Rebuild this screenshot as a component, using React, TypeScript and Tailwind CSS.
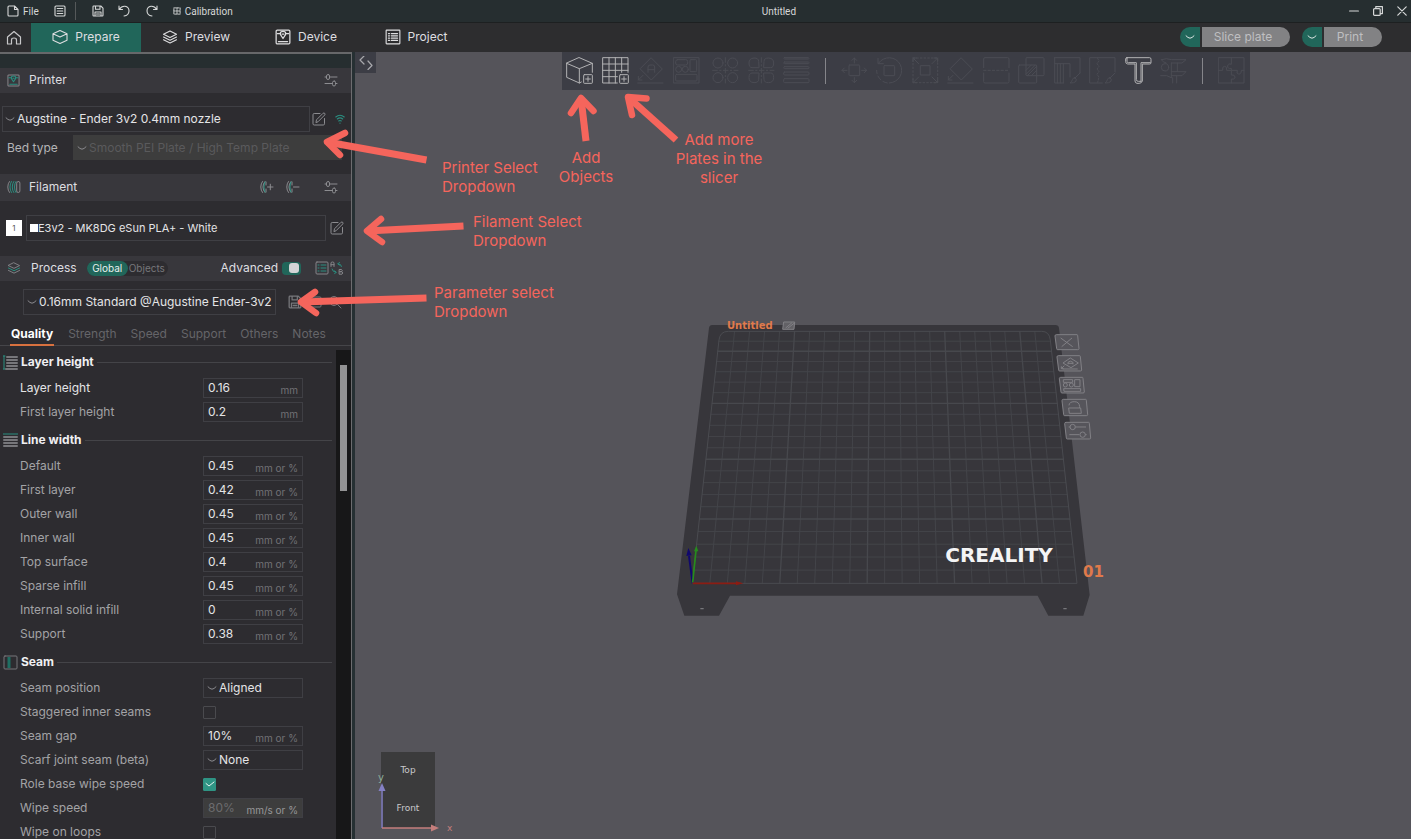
import React from "react";

type IconProps = { className?: string };

const TEAL = "#2a8f80";

function Svg({
  box,
  className,
  sw = 1,
  children,
}: {
  box: string;
  className?: string;
  sw?: number;
  children: React.ReactNode;
}) {
  return (
    <svg
      viewBox={box}
      className={className}
      fill="none"
      stroke="currentColor"
      strokeWidth={sw}
      strokeLinecap="round"
      strokeLinejoin="round"
      aria-hidden="true"
    >
      {children}
    </svg>
  );
}

/* ---------- small icons ---------- */

const Chevron = ({ className = "h-2 w-2.5" }: IconProps) => (
  <Svg box="0 0 10 8" className={`shrink-0 ${className}`}>
    <path d="M1 2.800Q3 5 5 5.200Q7 5 9 2.800" />
  </Svg>
);

const Sliders = () => (
  <Svg box="0 0 14 14" className="h-3.5 w-3.5">
    <path d="M1 4h1.500M6 4h7M1 10.500h7M11.500 10.500H13" />
    <rect x="2.500" y="1.500" width="3" height="5" rx="1.500" />
    <rect x="8.500" y="8" width="3" height="5" rx="1.500" />
  </Svg>
);

const EditIcon = () => (
  <Svg box="0 0 14 14" className="h-3.5 w-3.5">
    <path d="M8 1.500H2.200Q1 1.500 1 2.700V11.800Q1 13 2.200 13H11.300Q12.500 13 12.500 11.800V6.500" />
    <path d="M4 10.200L4.500 7.800L11 1.300Q12 .6 12.800 1.400Q13.400 2.200 12.700 3L6.300 9.500Z" />
  </Svg>
);

const SaveIcon = ({ className = "h-3 w-3" }: IconProps) => (
  <Svg box="0 0 12 12" className={className} sw={1.1}>
    <path d="M1 1.700Q1 1 1.700 1H8.800L11 3.200V10.300Q11 11 10.300 11H1.700Q1 11 1 10.300ZM3.500 1V4.200H8V1M3 11V7H9V11M4.500 9h3" />
  </Svg>
);

const PrinterIcon = ({ accent, className }: { accent?: string; className: string }) => (
  <Svg box="0 0 14 14" className={className} sw={1.1}>
    <rect x="1" y="1" width="12" height="12" rx="1" />
    <path d="M3 11h8" stroke={accent} />
    <path d="M2 4h2.500M9.500 4H12M4.800 2.800Q7 1.500 9.200 2.800V5L7 8.300L4.800 5Z" stroke={accent} />
    <path d="M6.300 4.500h1.400" stroke={accent} />
  </Svg>
);

const Layers = ({ accent, className }: { accent?: string; className: string }) => (
  <Svg box="0 0 16 14" className={className} sw={1.1}>
    <path d="M8 1L14.500 4.200L8 7.400L1.500 4.200Z" />
    <path d="M1.500 7L8 10.200L14.500 7" stroke={accent} />
    <path d="M1.500 9.800L8 13L14.500 9.800" />
  </Svg>
);

const Spools = ({ sign }: { sign?: "plus" | "minus" }) => (
  <Svg box="0 0 14 14" className="h-3.5 w-3.5">
    <path d="M2.500 1.500Q.8 3.500 .8 7T2.500 12.500" />
    {sign ? (
      <>
        <path d="M5 1.500Q3 3.500 3 7T5 12.500M6 2V5M6 9V12" />
        <path d="M5 2Q4 4 4 7T5 12" stroke={TEAL} />
        <path d="M7.500 7h5.500" />
        {sign === "plus" && <path d="M10.300 4.200v5.600" />}
      </>
    ) : (
      <>
        <path d="M4.500 1.500Q3 3.500 3 7T4.500 12.500M6.800 1.500Q5.300 3.500 5.300 7T6.800 12.500M9 1.500Q7.500 3.500 7.500 7T9 12.500" stroke={TEAL} />
        <rect x="9.700" y="1.500" width="3.200" height="11" rx="1.600" />
      </>
    )}
  </Svg>
);

/* ---------- 3D toolbar icons ---------- */

const PlusBox = () => (
  <>
    <rect x="53" y="53" width="26" height="26" rx="2" />
    <path d="M66 59v14M59 66h14" />
  </>
);

const toolIcons: Record<string, React.ReactNode> = {
  "Add object": (
    <>
      <path d="M40 2L79 19L40 35L2 19ZM2 19V61L40 78L46 75M40 35V78M79 19V46" />
      <PlusBox />
    </>
  ),
  "Add plate": (
    <>
      <path d="M46 78H2V2H78V46M21 2V78M40 2V78M59 2V46M2 21H78M2 40H78M2 59H46" />
      <PlusBox />
    </>
  ),
  "Auto orient": (
    <>
      <path d="M43 3L76 36L43 69L10 36ZM2 78H78M18 55L4 69M4 58V69H15M33 46V30Q33 24 39 24H47Q53 24 53 30V46M33 38H53" />
    </>
  ),
  Arrange: (
    <>
      <rect x="2" y="2" width="76" height="76" />
      <rect x="8" y="8" width="36" height="16" rx="6" />
      <rect x="51" y="8" width="20" height="36" rx="3" />
      <rect x="8" y="52" width="64" height="20" rx="3" />
      <circle cx="17" cy="37" r="9" />
      <circle cx="37" cy="37" r="9" />
    </>
  ),
  "Split to objects": (
    <>
      <circle cx="18" cy="18" r="15" />
      <circle cx="62" cy="18" r="15" />
      <circle cx="18" cy="62" r="15" />
      <circle cx="62" cy="62" r="15" />
      <path d="M40 2V78M2 40H78" strokeDasharray="14 7 4 7" />
    </>
  ),
  "Split to parts": (
    <>
      <path d="M32 32H12Q3 32 3 18T18 3Q32 3 32 12ZM48 32H68Q77 32 77 18T62 3Q48 3 48 12ZM32 48H12Q3 48 3 62T18 77Q32 77 32 68ZM48 48H68Q77 48 77 62T62 77Q48 77 48 68Z" />
      <path d="M40 2V78M2 40H78" strokeDasharray="14 7 4 7" />
    </>
  ),
  "Variable layer height": (
    <>
      <rect x="2" y="2" width="76" height="4" rx="2" />
      <rect x="2" y="15" width="76" height="5" rx="2" />
      <rect x="2" y="29" width="76" height="6" rx="3" />
      <rect x="2" y="45" width="76" height="9" rx="3" />
      <rect x="2" y="65" width="76" height="12" rx="3" />
    </>
  ),
  Move: (
    <>
      <rect x="24" y="24" width="32" height="32" rx="2" />
      <path d="M40 18V3M33 10L40 3L47 10M40 62V77M33 70L40 77L47 70M18 40H3M10 33L3 40L10 47M62 40H77M70 33L77 40L70 47" />
    </>
  ),
  Rotate: (
    <>
      <rect x="24" y="26" width="32" height="30" rx="2" />
      <path d="M8 18A38 38 0 1 1 40 78M6 4V20H22" />
      <path d="M34 78A38 38 0 0 1 2 40" strokeDasharray="14 8" />
    </>
  ),
  Scale: (
    <>
      <rect x="26" y="26" width="28" height="28" />
      <path d="M3 3H77V77H3Z" strokeDasharray="5 6" />
      <path d="M20 20L3 3M3 14V3H14M60 20L77 3M66 3H77V14M20 60L3 77M3 66V77H14M60 60L77 77M66 77H77V66" />
    </>
  ),
  "Lay on face": <path d="M43 3L76 36L43 69L10 36ZM2 78H78M18 55L4 69M4 58V69H15" />,
  Cut: (
    <>
      <path d="M2 32V6Q2 2 6 2H74Q78 2 78 6V32M2 48V74Q2 78 6 78H74Q78 78 78 74V48" />
      <path d="M2 40H78" strokeDasharray="7 6" />
    </>
  ),
  "Mesh boolean": (
    <>
      <rect x="24" y="2" width="54" height="54" rx="3" />
      <rect x="2" y="24" width="54" height="54" rx="3" />
      <path d="M24 40L40 24M24 52L52 24M28 56L56 28M40 56L56 40" />
    </>
  ),
  "Support painting": (
    <>
      <path d="M2 2H78V48M2 2V78H28M2 20H48V60M10 20V78M19 20V78M28 20V78M78 48L62 64M62 62Q70 66 66 73Q60 79 48 78Q54 74 55 68Q57 62 62 62Z" />
    </>
  ),
  "Seam painting": (
    <>
      <path d="M26 2H2V78H40M26 2H78V44M78 48L62 64M62 62Q70 66 66 73Q60 79 48 78Q54 74 55 68Q57 62 62 62Z" />
      <path d="M26 4L30 12L24 20L30 28L24 36L30 44L24 52L30 60L26 76" strokeDasharray="5 4" />
    </>
  ),
  "Text shape": (
    <>
      <path d="M6 2H74Q78 2 78 7V17Q78 21 74 21H52V72Q50 79 42 79H36Q30 78 30 72V21H8Q2 20 2 14V6Q2 2 6 2Z" />
      <path d="M6 2V13Q6 17 10 17H34V68Q34 73 40 73H48M48 73V17H76" />
    </>
  ),
  Measure: (
    <>
      <path d="M4 8Q20 2 34 8H78L66 18H34M4 8Q8 16 18 18M34 18V62M52 18V44M34 44H78L66 56H34M2 56H20L34 62M38 62V78M50 56V78" />
      <circle cx="15" cy="31" r="11" />
    </>
  ),
  "Assembly view": (
    <path d="M2 2H78V78H2ZM40 2V22Q30 18 29 27T40 34V40H58Q54 50 62 51T70 40H78M2 40H14Q12 28 20 28T26 40H40V54Q50 52 51 60T40 66V78" />
  ),
};

const toolGroups: string[][] = [
  ["Add object", "Add plate", "Auto orient", "Arrange"],
  ["Split to objects", "Split to parts", "Variable layer height"],
  [
    "Move",
    "Rotate",
    "Scale",
    "Lay on face",
    "Cut",
    "Mesh boolean",
    "Support painting",
    "Seam painting",
    "Text shape",
    "Measure",
  ],
  ["Assembly view"],
];

const enabledTools = ["Add object", "Add plate", "Text shape"];

function ToolButton({ name }: { name: string }) {
  const on = enabledTools.includes(name);
  return (
    <button
      type="button"
      aria-label={name}
      disabled={!on}
      className={`flex min-w-0 flex-1 items-center justify-center pb-px ${on ? "text-[#b2b2b4]" : "text-[#4b4c54]"}`}
    >
      <Svg box="0 0 81 81" className="h-[27px] w-[27px]" sw={3}>
        {toolIcons[name]}
      </Svg>
    </button>
  );
}

function Toolbar() {
  return (
    <div role="toolbar" aria-label="3D tools" className="ml-[186px] flex h-[38px] w-[688px] bg-[#3c3d45] pr-px">
      {toolGroups.map((names, i) => (
        <React.Fragment key={i}>
          {i === 1 && <div className="w-1" />}
          {i > 1 && (
            <div className="flex w-[22px] items-center justify-center">
              <div className="h-[26px] w-px bg-[#85858a]" />
            </div>
          )}
          {names.map((n) => (
            <ToolButton key={n} name={n} />
          ))}
        </React.Fragment>
      ))}
    </div>
  );
}

/* ---------- title bar ---------- */

function TitleBar() {
  return (
    <header className="flex h-[23px] shrink-0 items-center border-b border-[#1d2021] bg-[#262e30] font-['Roboto'] text-[10px] text-[#d6d8d8]">
      <div className="flex items-center">
        <button type="button" className="flex items-center gap-1 pl-[7px]">
          <Svg box="0 0 12 12" className="h-3 w-3" sw={1.1}>
            <path d="M7.500 1H2Q1 1 1 2V10Q1 11 2 11H10Q11 11 11 10V4.500ZM7.500 1V4.500H11" />
          </Svg>
          File
        </button>
        <button type="button" aria-label="Menu" className="ml-[15px]">
          <Svg box="0 0 12 12" className="h-3 w-3" sw={1.1}>
            <rect x="1" y="1" width="10" height="10" rx="1" />
            <path d="M3.200 3.500H8.800M3.200 6H8.800M3.200 8.500H8.800" />
          </Svg>
        </button>
        <div className="ml-[9px] h-[18px] w-px bg-[#55595a]" />
        <button type="button" aria-label="Save" className="ml-4">
          <SaveIcon />
        </button>
        <button type="button" aria-label="Undo" className="ml-[14px]">
          <Svg box="0 0 12 12" className="h-3 w-3" sw={1.1}>
            <path d="M1 1V4.500H4.500M1.500 4.200Q3.500 1 7 1.300Q11 2 11 6Q10.800 10.500 6 11" />
          </Svg>
        </button>
        <button type="button" aria-label="Redo" className="ml-4">
          <Svg box="0 0 12 12" className="h-3 w-3" sw={1.1}>
            <path d="M11 1V4.500H7.500M10.500 4.200Q8.500 1 5 1.300Q1 2 1 6Q1.200 10.500 6 11" />
          </Svg>
        </button>
        <button type="button" className="ml-[15px] flex items-center gap-1">
          <Svg box="0 0 9 9" className="h-2 w-2">
            <rect x="1" y="1" width="7" height="7" strokeDasharray="2.500 1" />
            <path d="M4.500 1V8M1 4.500H8" strokeDasharray="1.500 1" />
          </Svg>
          Calibration
        </button>
      </div>
      <h1 className="flex-1 text-center">Untitled</h1>
      <div className="flex items-center gap-3.5 pl-6 pr-1">
        <button type="button" aria-label="Minimize">
          <Svg box="0 0 10 10" className="h-2.5 w-2.5" sw={1.2}>
            <path d="M.6 5H9.400" />
          </Svg>
        </button>
        <button type="button" aria-label="Restore">
          <Svg box="0 0 10 10" className="h-2.5 w-2.5" sw={1.2}>
            <rect x=".6" y="2.600" width="6.600" height="6.800" rx="1" />
            <path d="M2.800 2.400V.6H9.400V7.600H7.400" />
          </Svg>
        </button>
        <button type="button" aria-label="Close">
          <Svg box="0 0 10 10" className="h-2.5 w-2.5" sw={1.2}>
            <path d="M.8 .8L9.200 9.200M9.200 .8L.8 9.200" />
          </Svg>
        </button>
      </div>
    </header>
  );
}

/* ---------- navigation ---------- */

const navTabs = [
  {
    name: "Prepare",
    icon: (
      <Svg box="0 0 16 14" className="h-[14px] w-4" sw={1.1}>
        <path d="M8 .6L15 3.800V10.300L8 13.400L1 10.300V3.800ZM1 3.800L8 7L15 3.800" />
      </Svg>
    ),
  },
  { name: "Preview", icon: <Layers className="h-[14px] w-4" /> },
  { name: "Device", icon: <PrinterIcon className="h-4 w-4" /> },
  {
    name: "Project",
    icon: (
      <Svg box="0 0 14 14" className="h-4 w-4">
        <rect x="1" y="1" width="12" height="12" rx=".5" />
        <path d="M3 4h1M5.500 4H11M3 6h1M5.500 6H11M3 8h1M5.500 8H11M3 10h1M5.500 10H11" />
      </Svg>
    ),
  },
];

function SplitButton({ label, width }: { label: string; width: string }) {
  return (
    <div className="flex h-5 gap-0.5">
      <button
        type="button"
        aria-label={`${label} options`}
        className="flex w-5 items-center justify-center rounded-l-full bg-[#21665a] text-[#dfe8e6]"
      >
        <Chevron />
      </button>
      <button type="button" className={`${width} rounded-r-full bg-[#828284] pb-px pr-1.5 text-[#bfbfc1]`}>
        {label}
      </button>
    </div>
  );
}

function NavBar() {
  return (
    <nav className="flex h-[29px] shrink-0 items-center bg-[#2d2d2f] text-[12px] text-[#dedee0]">
      <button type="button" aria-label="Home" className="flex w-[31px] justify-center pr-[3px] text-[#c8c8ca]">
        <Svg box="0 0 16 16" className="h-4 w-4" sw={1.2}>
          <path d="M1.500 7L8 1.500L14.500 7V14H10.500V10Q10.500 8 8 8T5.500 10V14H1.500Z" />
        </Svg>
      </button>
      {navTabs.map((t, i) => (
        <button
          type="button"
          key={t.name}
          className={`flex h-full w-[110px] items-center justify-center gap-[7px] pb-0.5 ${i === 0 ? "bg-[#21665a]" : ""}`}
        >
          {t.icon}
          {t.name}
        </button>
      ))}
      <div className="ml-auto flex gap-3 pb-px pr-[29px]">
        <SplitButton label="Slice plate" width="w-[88px]" />
        <SplitButton label="Print" width="w-[58px]" />
      </div>
    </nav>
  );
}

/* ---------- sidebar ---------- */

function SectionHeader({ children, height }: { children: React.ReactNode; height: string }) {
  return (
    <div className={`flex shrink-0 items-center bg-[#38373c] pb-px pl-[7px] pr-[13px] text-[12px] text-[#dedee0] ${height}`}>
      {children}
    </div>
  );
}

function Dropdown({
  id,
  value,
  label,
  className,
  disabled,
}: {
  id: string;
  value: string;
  label?: string;
  className: string;
  disabled?: boolean;
}) {
  return (
    <div className={`flex items-center gap-0.5 border text-[#8c8c90] ${className}`}>
      <Chevron />
      <select
        id={id}
        aria-label={label}
        disabled={disabled}
        className={`min-w-0 flex-1 appearance-none bg-transparent outline-none ${disabled ? "text-[#5a5a5c]" : "text-[#e4e4e6]"}`}
      >
        <option>{value}</option>
      </select>
    </div>
  );
}

type Row = {
  label: string;
  kind: "input" | "select" | "check";
  value?: string;
  unit?: string;
  checked?: boolean;
  disabled?: boolean;
  bright?: boolean;
};

const mm = "mm";
const mmPct = "mm or %";

const groups: { title: string; icon: React.ReactNode; rows: Row[] }[] = [
  {
    title: "Layer height",
    icon: (
      <>
        <path d="M1 1V14M0 1H2M0 14H2" stroke={TEAL} />
        <path d="M4 2H14M4 5H14M4 8H14M4 11H14M3 14H14" strokeWidth="2" />
      </>
    ),
    rows: [
      { label: "Layer height", kind: "input", value: "0.16", unit: mm, bright: true },
      { label: "First layer height", kind: "input", value: "0.2", unit: mm },
    ],
  },
  {
    title: "Line width",
    icon: (
      <>
        <path d="M0 1H15" stroke={TEAL} />
        <path d="M1 4H14M1 7H14M1 10H14M1 13H14" strokeWidth="2" />
      </>
    ),
    rows: [
      { label: "Default", kind: "input", value: "0.45", unit: mmPct },
      { label: "First layer", kind: "input", value: "0.42", unit: mmPct },
      { label: "Outer wall", kind: "input", value: "0.45", unit: mmPct },
      { label: "Inner wall", kind: "input", value: "0.45", unit: mmPct },
      { label: "Top surface", kind: "input", value: "0.4", unit: mmPct },
      { label: "Sparse infill", kind: "input", value: "0.45", unit: mmPct },
      { label: "Internal solid infill", kind: "input", value: "0", unit: mmPct },
      { label: "Support", kind: "input", value: "0.38", unit: mmPct },
    ],
  },
  {
    title: "Seam",
    icon: (
      <>
        <rect x="1" y="1" width="13" height="13" rx="1" />
        <path d="M6 2V13" stroke="#1f6f63" strokeWidth="3" strokeLinecap="butt" />
      </>
    ),
    rows: [
      { label: "Seam position", kind: "select", value: "Aligned" },
      { label: "Staggered inner seams", kind: "check" },
      { label: "Seam gap", kind: "input", value: "10%", unit: mmPct },
      { label: "Scarf joint seam (beta)", kind: "select", value: "None" },
      { label: "Role base wipe speed", kind: "check", checked: true },
      { label: "Wipe speed", kind: "input", value: "80%", unit: "mm/s or %", disabled: true },
      { label: "Wipe on loops", kind: "check" },
    ],
  },
];

function SettingRow({ row, id }: { row: Row; id: string }) {
  return (
    <div className="flex h-6 shrink-0 items-center">
      <label htmlFor={id} className={`w-[183px] ${row.bright ? "text-[#e4e4e6]" : "text-[#a3a3a6]"}`}>
        {row.label}
      </label>
      {row.kind === "input" && (
        <div
          className={`flex h-5 w-[100px] items-center border border-[#3f3f44] px-1 ${row.disabled ? "bg-[#3d3d3d]" : ""}`}
        >
          <input
            id={id}
            defaultValue={row.value}
            disabled={row.disabled}
            className={`w-8 min-w-0 flex-1 bg-transparent outline-none ${row.disabled ? "text-[#6c6c6e]" : "text-[#e4e4e6]"}`}
          />
          <span className={`pt-1 text-[10px] ${row.disabled ? "text-[#98989a]" : "text-[#727276]"}`}>{row.unit}</span>
        </div>
      )}
      {row.kind === "select" && <Dropdown id={id} value={row.value!} className="h-5 w-[100px] border-[#3f3f44] pl-[3px]" />}
      {row.kind === "check" && (
        <span className="grid h-[13px] w-[13px] place-items-center">
          <input
            id={id}
            type="checkbox"
            defaultChecked={row.checked}
            className="col-start-1 row-start-1 h-[13px] w-[13px] appearance-none rounded-[1px] border border-[#4a4a4e] checked:border-[#2f9484] checked:bg-[#2f9484]"
          />
          {row.checked && (
            <Svg box="0 0 10 8" className="pointer-events-none col-start-1 row-start-1 h-2 w-2.5 text-[#e8f4f2]">
              <path d="M1 3.500L4 6L9 2" />
            </Svg>
          )}
        </span>
      )}
    </div>
  );
}

const processTabs = ["Quality", "Strength", "Speed", "Support", "Others", "Notes"];

function Sidebar() {
  return (
    <aside className="flex w-[355px] shrink-0 flex-col border-r-[3px] border-[#263033]">
      <div className="flex min-h-0 flex-1 flex-col border-r border-t-2 border-r-[#6c6c6f] border-t-[#67686a] bg-[#2d2c30] text-[12px]">
        <div className="h-[14px] shrink-0 bg-[#262e30]" />

        <SectionHeader height="h-[25px]">
          <span className="text-[#858589]">
            <PrinterIcon accent={TEAL} className="h-[13px] w-[13px]" />
          </span>
          <h2 className="ml-[9px] flex-1">Printer</h2>
          <button type="button" aria-label="Printer settings" className="text-[#8c8c90]">
            <Sliders />
          </button>
        </SectionHeader>

        <div className="mt-[13px] flex shrink-0 items-center pl-[2px]">
          <Dropdown
            id="printer"
            label="Printer"
            value="Augstine - Ender 3v2 0.4mm nozzle"
            className="h-[26px] w-[308px] border-[#3f3f44] pl-[2px]"
          />
          <button type="button" aria-label="Edit printer" className="ml-[2px] text-[#8c8c90]">
            <EditIcon />
          </button>
          <button type="button" aria-label="Connection" className="ml-[9px] text-[#2a8f80]">
            <Svg box="0 0 10 10" className="h-2.5 w-2.5" sw={1.1}>
              <path d="M.8 3Q5 -.5 9.200 3M2.300 5Q5 2.700 7.700 5M3.700 7Q5 5.900 6.300 7M5 9v.2" />
            </Svg>
          </button>
        </div>

        <div className="mt-[3px] flex shrink-0 items-center pl-[7px]">
          <label htmlFor="bed" className="w-[66px] text-[#b4b4b7]">
            Bed type
          </label>
          <Dropdown
            id="bed"
            disabled
            value="Smooth PEI Plate / High Temp Plate"
            className="h-[25px] w-[269px] border-[#3d3d3d] bg-[#3d3d3d] pl-[3px]"
          />
        </div>

        <div className="h-[14px] shrink-0" />
        <SectionHeader height="h-[27px]">
          <span className="text-[#858589]">
            <Spools />
          </span>
          <h2 className="ml-2 flex-1">Filament</h2>
          <div className="flex items-center text-[#8c8c90]">
            <button type="button" aria-label="Add filament">
              <Spools sign="plus" />
            </button>
            <button type="button" aria-label="Remove filament" className="ml-3">
              <Spools sign="minus" />
            </button>
            <button type="button" aria-label="Filament settings" className="ml-6">
              <Sliders />
            </button>
          </div>
        </SectionHeader>

        <div className="mt-[14px] flex shrink-0 items-center pl-1.5">
          <button type="button" className="h-4 w-4 bg-white text-[8px] text-[#555]">
            1
          </button>
          <div className="ml-1 flex h-[26px] w-[300px] items-center border border-[#3f3f44] pl-[3px]">
            <span className="h-2 w-2 shrink-0 bg-white" />
            <select
              aria-label="Filament"
              className="min-w-0 flex-1 appearance-none bg-transparent text-[11px] text-[#e4e4e6] outline-none"
            >
              <option>E3v2 - MK8DG eSun PLA+ - White</option>
            </select>
          </div>
          <button type="button" aria-label="Edit filament" className="ml-1 text-[#8c8c90]">
            <EditIcon />
          </button>
        </div>

        <div className="h-[15px] shrink-0" />
        <SectionHeader height="h-[25px]">
          <span className="text-[#858589]">
            <Layers accent={TEAL} className="h-3 w-[14px]" />
          </span>
          <h2 className="ml-2.5">Process</h2>
          <div className="ml-[10px] flex h-[15px] items-center rounded-full bg-[#2d2c30] text-[10px]">
            <button type="button" className="h-[15px] w-[41px] rounded-full bg-[#21665a] text-[#e8f0ee]">
              Global
            </button>
            <button type="button" className="pl-px pr-[3px] text-[#77777b]">
              Objects
            </button>
          </div>
          <label htmlFor="advanced" className="ml-auto">
            Advanced
          </label>
          <span className="ml-1 grid h-[13px] w-[19px] items-center">
            <input
              id="advanced"
              type="checkbox"
              role="switch"
              defaultChecked
              className="col-start-1 row-start-1 h-[13px] w-[19px] appearance-none rounded-[4px] bg-[#21665a]"
            />
            <span className="pointer-events-none col-start-1 row-start-1 mr-0.5 h-[10px] w-[10px] justify-self-end rounded-[3px] bg-[#d4d4d6]" />
          </span>
          <div className="-mr-[6px] ml-[14px] flex items-center gap-px text-[#858589]">
            <button type="button" aria-label="Parameter list">
              <Svg box="0 0 14 14" className="h-3.5 w-3.5">
                <rect x="1" y="1" width="12" height="12" rx="1" />
                <path d="M3 4h1M6 4h5M3 7h1M6 7h5M3 10h1M6 10h5" stroke={TEAL} />
              </Svg>
            </button>
            <button type="button" aria-label="Compare presets">
              <Svg box="0 0 14 14" className="h-3.5 w-3.5">
                <path d="M1 5.500V2Q1 1 2.500 1T4 2V5.500M1 3.700H4M9.500 8.500H11.500Q13 9.500 11.500 10.700H9.500H12Q13.500 12 12 13.200H9.500Z" />
                <path d="M11.500 5.500Q11.500 3 8 2.800M9.500 1.300L8 2.800L9.500 4.300M2 8Q2.500 11 6 11.300M4.600 9.800L6 11.300L4.600 12.800" stroke={TEAL} />
              </Svg>
            </button>
          </div>
        </SectionHeader>

        <div className="mt-2 flex shrink-0 items-center pl-[23px]">
          <Dropdown
            id="preset"
            label="Process preset"
            value="0.16mm Standard @Augustine Ender-3v2"
            className="h-[26px] w-[253px] border-[#3f3f44] pl-[3px]"
          />
          <div className="ml-3 flex gap-1.5 text-[#77777b]">
            <button type="button" aria-label="Save preset">
              <SaveIcon className="h-3.5 w-3.5" />
            </button>
            <button type="button" aria-label="Delete preset">
              <Svg box="0 0 14 14" className="h-3.5 w-3.5">
                <rect x="1" y="2" width="12" height="10" rx="1" />
              </Svg>
            </button>
            <button type="button" aria-label="Search">
              <Svg box="0 0 14 14" className="h-3.5 w-3.5">
                <circle cx="6" cy="6" r="4.500" />
                <path d="M9.500 9.500L13 13" />
              </Svg>
            </button>
          </div>
        </div>

        <div className="mt-2 flex h-[23px] shrink-0 gap-[14px] border-b border-[#454549] pl-2.5">
          {processTabs.map((t, i) => (
            <button
              type="button"
              key={t}
              className={
                i === 0
                  ? "-mb-px border-b-2 border-[#d8713f] px-px font-bold text-white"
                  : "-mb-px border-b-2 border-transparent text-[#656569]"
              }
            >
              {t}
            </button>
          ))}
        </div>

        <div className="flex min-h-0 flex-1">
          <div className="flex min-w-0 flex-1 flex-col overflow-hidden">
            {groups.map((g) => (
              <section key={g.title} className="flex shrink-0 flex-col">
                <div className="mt-0.5 flex h-7 items-center pl-[3px] pr-1">
                  <Svg box="0 0 15 15" className="h-[15px] w-[15px] text-[#77777b]">
                    {g.icon}
                  </Svg>
                  <h3 className="ml-[3px] font-bold text-[#f0f0f2]">{g.title}</h3>
                  <div className="ml-[3px] h-px flex-1 bg-[#444448]" />
                </div>
                <div className="flex flex-col pl-5">
                  {g.rows.map((r) => (
                    <SettingRow key={r.label} row={r} id={`${g.title}-${r.label}`.replace(/\W+/g, "-")} />
                  ))}
                </div>
              </section>
            ))}
          </div>
          <div className="mt-1 w-[15px] bg-[#171718] pl-1 pt-[15px]">
            <div className="h-[126px] w-[7px] bg-[#939394]" />
          </div>
        </div>
      </div>
    </aside>
  );
}

/* ---------- build plate ---------- */

const CELLS = 22;
const BED = { leftX: 97, rightX: 1251, bottomY: 820, centerX: 674, ratio: 0.1647, depth: 5346 };

/* Perspective projection of a bed point, u and v running from 0 to 1. */
function project(u: number, v: number): [number, number] {
  const d = 1 + BED.ratio * v;
  const x = BED.centerX + (BED.leftX - BED.centerX + u * (BED.rightX - BED.leftX)) / d;
  const y = BED.bottomY - BED.depth + BED.depth / d;
  return [x, y];
}

function line(a: [number, number], b: [number, number]) {
  return `M${a[0].toFixed(1)} ${a[1].toFixed(1)}L${b[0].toFixed(1)} ${b[1].toFixed(1)}`;
}

function gridPath(major: boolean) {
  let d = "";
  for (let i = 1; i < CELLS; i++) {
    if ((i % 5 === 0) !== major) continue;
    d += line(project(i / CELLS, 0), project(i / CELLS, 1));
    d += line(project(0, i / CELLS), project(1, i / CELLS));
  }
  return d;
}

const plateIcons: { at: [number, number]; w: number; h: number; body: React.ReactNode }[] = [
  { at: [1185, 74], w: 68, h: 45, body: <path d="M17 10L53 36M51 10L20 36" /> },
  {
    at: [1191, 137],
    w: 70,
    h: 46,
    body: <path d="M40 7L64 22L42 36L18 22ZM33 26V20Q40 13 48 20V26M33 23H48M17 40H62M22 30L14 38M13 32V39H20" />,
  },
  {
    at: [1198, 202],
    w: 71,
    h: 47,
    body: (
      <>
        <path d="M12 7H40V15H12ZM46 7H62V28H46ZM13 34H64V42H14Z" />
        <circle cx="18" cy="23" r="6" />
        <circle cx="36" cy="23" r="6" />
      </>
    ),
  },
  { at: [1206, 268], w: 73, h: 49, body: <path d="M20 26H56L58 42H22ZM21 18Q22 7 37 7T53 22V26" /> },
  {
    at: [1214, 337],
    w: 74,
    h: 50,
    body: (
      <>
        <path d="M12 14H16M32 14H64M14 37H44M62 37H66" />
        <circle cx="24" cy="14" r="8" />
        <circle cx="54" cy="37" r="8" />
      </>
    ),
  },
];

function BuildPlate() {
  return (
    <svg
      viewBox="0 0 460 320"
      className="absolute left-[305px] top-[258px] h-[320px] w-[460px]"
      fill="none"
      role="img"
      aria-label="Build plate"
    >
      <g transform="scale(0.33333)">
        <path
          d="M147 54Q148 45 157 45H1186Q1196 45 1197 54L1289 855L1270 917H1165L1133 857H210L177 917H73L51 853Z"
          fill="#37363b"
        />
        <path d={gridPath(false)} stroke="#434449" strokeWidth="3" />
        <path d={gridPath(true)} stroke="#47484d" strokeWidth="4" />
        <path d="M97 820L177 90Q180 64 205 64H1145Q1168 64 1171 90L1251 820Z" stroke="#4a4b50" strokeWidth="3" />
        <path d="M121 896h10M1210 896h10" stroke="#77777b" strokeWidth="4" />

        <path d="M98 820L87 738" stroke="#10086e" strokeWidth="6" />
        <path d="M79 738L85 714L95 736Z" fill="#10086e" />
        <path d="M98 818L108 722" stroke="#268c1c" strokeWidth="5" />
        <path d="M102 724L109 707L115 724Z" fill="#268c1c" />
        <path d="M98 820H232" stroke="#8c1c12" strokeWidth="5" />
        <path d="M228 814L250 820L228 826Z" fill="#8c1c12" />

        <g stroke="#828186" strokeWidth="3" strokeLinejoin="round">
          <path d="M371 36H404L402 58H368Z" fill="#626166" />
          <path d="M377 54L396 38M383 55L402 40" />
          {plateIcons.map((p, i) => (
            <g key={i} transform={`translate(${p.at[0]} ${p.at[1]})`}>
              <path
                d={`M4 0H${p.w - 2}Q${p.w} 0 ${p.w} 3L${p.w + 4} ${p.h - 3}Q${p.w + 4} ${p.h} ${p.w} ${p.h}H8Q5 ${p.h} 5 ${p.h - 3}L0 4Q0 0 4 0Z`}
                fill="#56555b"
              />
              {p.body}
            </g>
          ))}
        </g>
      </g>
      <g fontFamily="'DejaVu Sans', sans-serif" fontWeight="700">
        <text x="67" y="19" fontSize="10" fill="#e07a4b">
          Untitled
        </text>
        <text x="423" y="267" fontSize="15" fill="#e07a4b">
          01
        </text>
        <text x="339" y="252" fontSize="20" textAnchor="middle" fill="#f4f4f5">
          CREALITY
        </text>
      </g>
    </svg>
  );
}

function ViewCube() {
  return (
    <div className="absolute bottom-0 left-[17px] h-[92px] w-[90px]">
      <div className="ml-[9px] mt-[5px] flex h-[76px] w-[54px] flex-col items-center justify-around bg-[#3b3b3c] font-['DejaVu_Sans'] text-[9px] text-[#c9c9cb]">
        <span>Top</span>
        <span>Front</span>
      </div>
      <svg viewBox="0 0 90 92" className="absolute inset-0 h-[92px] w-[90px]" fill="none" aria-hidden="true">
        <path d="M10 81V43" stroke="#8480c4" strokeWidth="1.500" />
        <path d="M6.500 44L10 36L13.500 44Z" fill="#8480c4" />
        <path d="M10 81H60" stroke="#c47e7c" strokeWidth="1.500" />
        <path d="M59 77.500L67 81L59 84.500Z" fill="#c47e7c" />
        <text x="6" y="34" fontSize="10" fontFamily="'DejaVu Sans', sans-serif" fill="#8fae9a">
          y
        </text>
        <text x="75" y="84" fontSize="9" fontFamily="'DejaVu Sans', sans-serif" fill="#c47e7c">
          x
        </text>
      </svg>
    </div>
  );
}

/* ---------- tutorial callouts ---------- */

const arrows: { shaft: string; head: string }[] = [
  { shaft: "M426.500 160L327 142", head: "M345 133L327 142L340 155" },
  { shaft: "M463.500 226L367 231", head: "M381 219L367 231L382 242" },
  { shaft: "M426.500 298L301 302", head: "M315 292L301 302L316 313" },
  { shaft: "M586 141L581 98", head: "M571 113L581 98L593.500 111" },
  { shaft: "M676 140L628 97", head: "M646.500 98.500L628 97L632 115" },
];

const notes: { lines: string[]; place: string }[] = [
  { lines: ["Printer Select", "Dropdown"], place: "left-[442px] top-[158px]" },
  { lines: ["Filament Select", "Dropdown"], place: "left-[473px] top-[212px]" },
  { lines: ["Parameter select", "Dropdown"], place: "left-[434px] top-[283px]" },
  { lines: ["Add", "Objects"], place: "left-[546px] top-[148px] w-20 text-center" },
  { lines: ["Add more", "Plates in the", "slicer"], place: "left-[664px] top-[130px] w-[110px] text-center" },
];

function Callouts() {
  return (
    <div className="pointer-events-none absolute left-0 top-0 text-[#f5655c]">
      <svg
        viewBox="0 0 720 340"
        className="h-[340px] w-[720px]"
        fill="none"
        stroke="currentColor"
        strokeLinejoin="round"
        aria-hidden="true"
      >
        {arrows.map((a) => (
          <g key={a.shaft}>
            <path d={a.shaft} strokeWidth="7" />
            <path d={a.head} strokeWidth="6.500" strokeLinecap="round" />
          </g>
        ))}
      </svg>
      {notes.map((n) => (
        <p key={n.place} className={`absolute whitespace-nowrap text-[15px] leading-[19px] ${n.place}`}>
          {n.lines.map((l) => (
            <span key={l} className="block">
              {l}
            </span>
          ))}
        </p>
      ))}
    </div>
  );
}

export default function App() {
  return (
    <div className="relative flex h-screen flex-col overflow-hidden bg-[#55545a] font-['Inter',sans-serif]">
      <TitleBar />
      <NavBar />
      <div className="flex min-h-0 flex-1">
        <Sidebar />
        <main className="relative flex min-w-0 flex-1 items-start overflow-hidden">
          <button
            type="button"
            aria-label="Collapse sidebar"
            className="flex h-[21px] w-[21px] items-center justify-center bg-[#3c3d45] text-[#a8a8ac]"
          >
            <Svg box="0 0 14 14" className="h-3.5 w-3.5" sw={1.2}>
              <path d="M5 0L1 4L5 8M9 5L13 9.500L9 13.500" />
            </Svg>
          </button>
          <Toolbar />
          <BuildPlate />
          <ViewCube />
        </main>
      </div>
      <Callouts />
    </div>
  );
}
